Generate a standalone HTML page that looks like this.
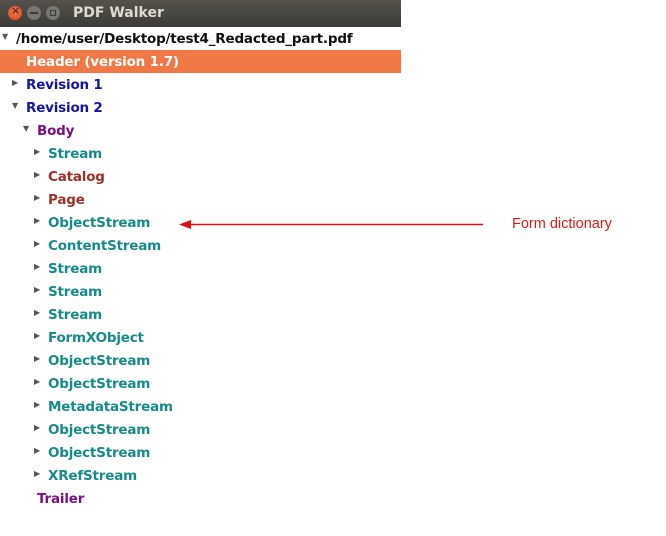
<!DOCTYPE html>
<html><head><style>
body{margin:0;width:666px;height:536px;background:#fff;position:relative;overflow:hidden;font-family:"DejaVu Sans","Liberation Sans",sans-serif;}
.tb{position:absolute;left:0;top:0;width:401px;height:27px;background:linear-gradient(#55524c,#3c3b37);}
.tb .t{position:absolute;left:73px;top:5px;color:#dfdbd2;font-weight:bold;font-size:14px;}
.btn{position:absolute;top:6px;width:14px;height:14px;border-radius:50%;}
.r{position:absolute;font-weight:bold;font-size:13.5px;line-height:23px;height:23px;white-space:nowrap;letter-spacing:-0.2px;margin-top:1px}
.a{position:absolute;font-size:8px;color:#555;line-height:23px;margin-top:-2px}
.hb{position:absolute;left:0;top:50px;width:401px;height:23px;background:#f07746;}
.teal{color:#178a8a}.brown{color:#a0302e}.blue{color:#1414a8}.purple{color:#7c107c}
</style></head><body>
<div class="tb">
<div class="btn" style="left:8px;background:radial-gradient(circle at 50% 40%,#f07a50,#d9461d);"><span style="position:absolute;left:3px;top:-2px;font-size:11px;color:#5a2a1a;font-weight:bold">×</span></div>
<div class="btn" style="left:27px;background:#77766f;"><span style="position:absolute;left:3px;top:6px;width:8px;height:2px;background:#3c3b37"></span></div>
<div class="btn" style="left:46px;background:#77766f;"><span style="position:absolute;left:4px;top:4px;width:4px;height:4px;border:1px solid #3c3b37"></span></div>
<div class="t">PDF Walker</div>
</div>
<div class="a" style="left:2px;top:27px">▼</div>
<div class="r" style="left:16px;top:27px;color:#111">/home/user/Desktop/test4_Redacted_part.pdf</div>
<div class="hb"></div>
<div class="r" style="left:26px;top:50px;color:#fff">Header (version 1.7)</div>
<div class="a" style="left:12px;top:73px">▶</div>
<div class="r blue" style="left:26px;top:73px">Revision 1</div>
<div class="a" style="left:12px;top:96px">▼</div>
<div class="r blue" style="left:26px;top:96px">Revision 2</div>
<div class="a" style="left:23px;top:119px">▼</div>
<div class="r purple" style="left:37px;top:119px">Body</div>

<div class="a" style="left:34px;top:142px">▶</div><div class="r teal" style="left:48px;top:142px">Stream</div>
<div class="a" style="left:34px;top:165px">▶</div><div class="r brown" style="left:48px;top:165px">Catalog</div>
<div class="a" style="left:34px;top:188px">▶</div><div class="r brown" style="left:48px;top:188px">Page</div>
<div class="a" style="left:34px;top:211px">▶</div><div class="r teal" style="left:48px;top:211px">ObjectStream</div>
<div class="a" style="left:34px;top:234px">▶</div><div class="r teal" style="left:48px;top:234px">ContentStream</div>
<div class="a" style="left:34px;top:257px">▶</div><div class="r teal" style="left:48px;top:257px">Stream</div>
<div class="a" style="left:34px;top:280px">▶</div><div class="r teal" style="left:48px;top:280px">Stream</div>
<div class="a" style="left:34px;top:303px">▶</div><div class="r teal" style="left:48px;top:303px">Stream</div>
<div class="a" style="left:34px;top:326px">▶</div><div class="r teal" style="left:48px;top:326px">FormXObject</div>
<div class="a" style="left:34px;top:349px">▶</div><div class="r teal" style="left:48px;top:349px">ObjectStream</div>
<div class="a" style="left:34px;top:372px">▶</div><div class="r teal" style="left:48px;top:372px">ObjectStream</div>
<div class="a" style="left:34px;top:395px">▶</div><div class="r teal" style="left:48px;top:395px">MetadataStream</div>
<div class="a" style="left:34px;top:418px">▶</div><div class="r teal" style="left:48px;top:418px">ObjectStream</div>
<div class="a" style="left:34px;top:441px">▶</div><div class="r teal" style="left:48px;top:441px">ObjectStream</div>
<div class="a" style="left:34px;top:464px">▶</div><div class="r teal" style="left:48px;top:464px">XRefStream</div>
<div class="r purple" style="left:37px;top:487px">Trailer</div>

<svg style="position:absolute;left:0;top:0" width="666" height="536">
<line x1="188" y1="224.5" x2="483" y2="224.5" stroke="#e01010" stroke-width="1.5"/>
<polygon points="179,224.5 191,220 191,229" fill="#e01010"/>
</svg>
<div style="position:absolute;left:512px;top:216px;font-family:'Liberation Sans',sans-serif;font-size:14.5px;color:#e01818">Form dictionary</div>
</body></html>
